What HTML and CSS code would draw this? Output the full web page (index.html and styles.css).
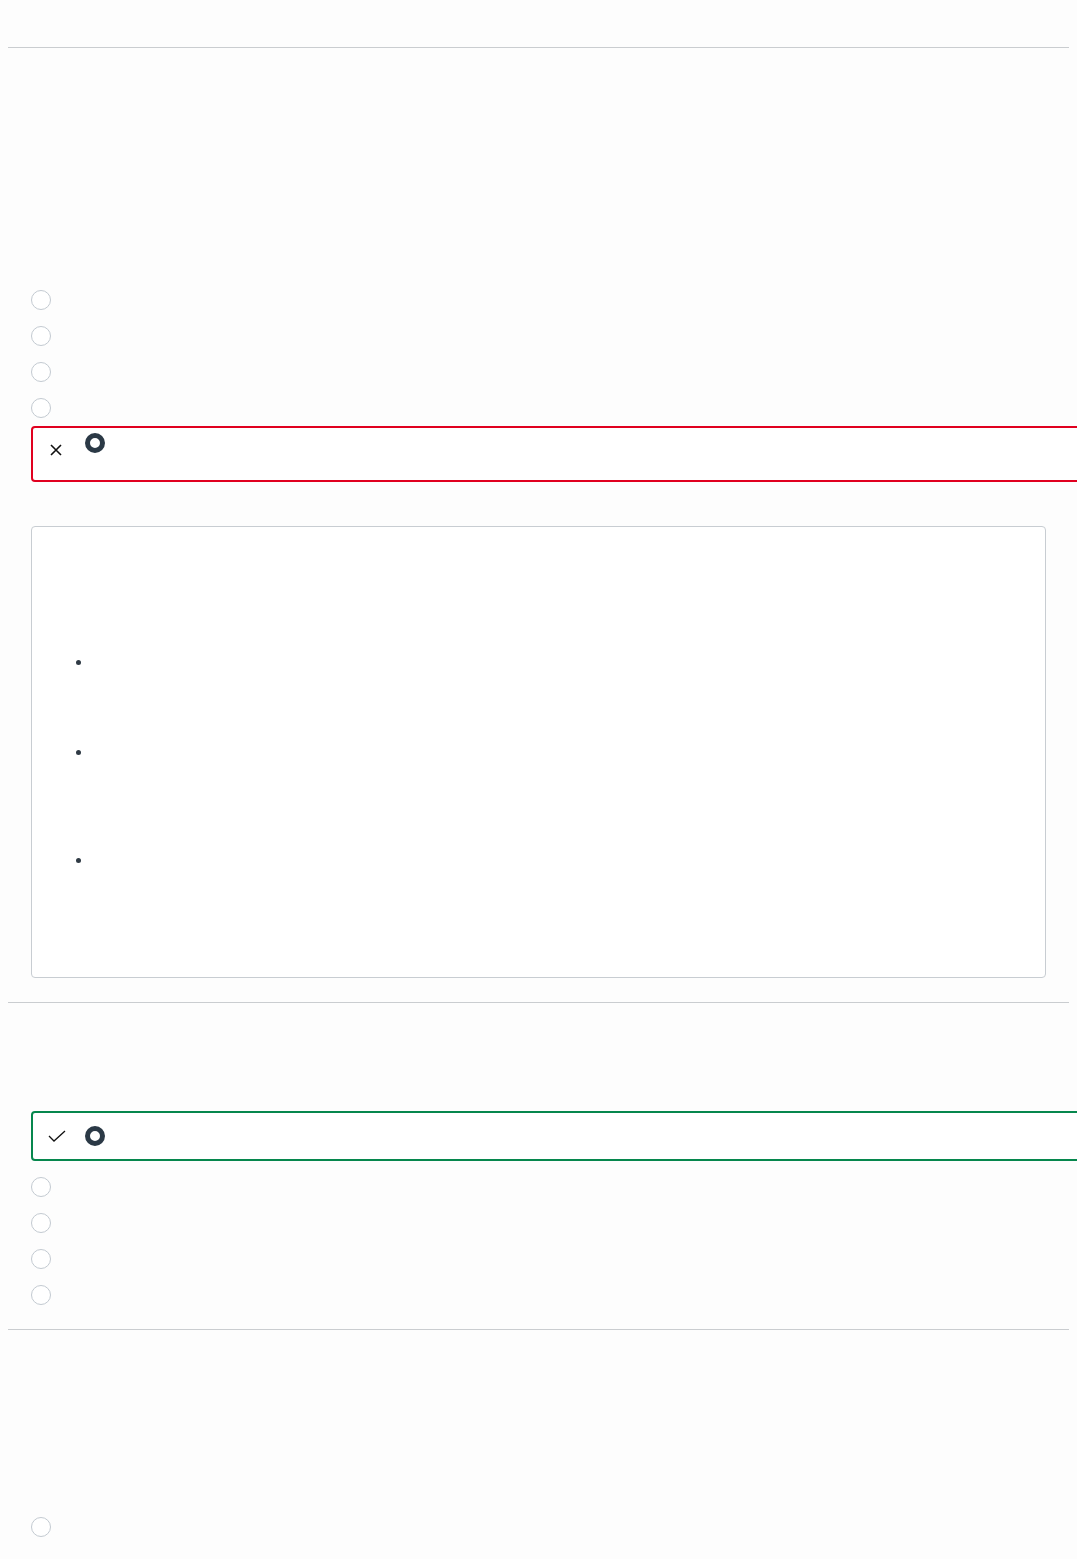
FILE: index.html
```html
<!DOCTYPE html>
<html>

<head>
	<meta charset="UTF-8">
	<title>Quiz review</title>
	<link rel="stylesheet" href="styles.css">
</head>

<body>
	<div class="page">
		<div class="rule"></div>

		<div class="question">
			<div class="stem stem-first"></div>
			<div class="option"><span class="radio"></span></div>
			<div class="option"><span class="radio"></span></div>
			<div class="option"><span class="radio"></span></div>
			<div class="option"><span class="radio"></span></div>
			<div class="answer answer-wrong">
				<svg class="mark-cross" width="12" height="12" viewBox="0 0 12 12">
					<path d="M1 1 L11 11 M11 1 L1 11" stroke="#111" stroke-width="1.6" fill="none" />
				</svg>
				<span class="radio radio-checked"></span>
			</div>

			<div class="feedback">
				<ul class="feedback-list">
					<li class="item-a"></li>
					<li class="item-b"></li>
					<li class="item-c"></li>
				</ul>
			</div>
		</div>

		<div class="rule rule-mid"></div>

		<div class="question">
			<div class="stem stem-second"></div>
			<div class="answer answer-right">
				<svg class="mark-check" width="18" height="12" viewBox="0 0 18 12">
					<path d="M1 6 L6 11 L17 1" stroke="#111" stroke-width="1.3" fill="none" />
				</svg>
				<span class="radio radio-checked"></span>
			</div>
			<div class="options-after">
				<div class="option"><span class="radio"></span></div>
				<div class="option"><span class="radio"></span></div>
				<div class="option"><span class="radio"></span></div>
				<div class="option"><span class="radio"></span></div>
			</div>
		</div>

		<div class="rule rule-last"></div>

		<div class="question">
			<div class="stem stem-third"></div>
			<div class="option"><span class="radio"></span></div>
		</div>
	</div>
</body>

</html>
```

FILE: styles.css
```css
html {
	overflow-x: hidden;
}

body {
	margin: 0;
	background: #fdfdfd;
	font-family: "Liberation Sans", Arial, sans-serif;
	color: #222;
}

.page {
	padding: 47px 8px 0;
}

.rule {
	height: 0;
	border-top: 1px solid #cacdd0;
}

.rule-mid {
	margin-top: 24px;
}

.rule-last {
	margin-top: 16px;
}

.question {
	padding-left: 23px;
}

.stem-first {
	height: 234px;
}

.stem-second {
	height: 108px;
}

.stem-third {
	height: 179px;
}

.option {
	height: 36px;
	display: flex;
	align-items: center;
}

.radio {
	display: inline-block;
	box-sizing: border-box;
	width: 20px;
	height: 20px;
	border-radius: 50%;
	border: 1px solid #c3cad1;
	background: #fff;
	flex: none;
}

.radio-checked {
	border: 5px solid #2b3946;
}

.answer {
	box-sizing: border-box;
	display: flex;
	width: calc(100% + 40px);
	border: 2px solid;
	border-radius: 4px;
	background: #fff;
}

.answer-wrong {
	height: 56px;
	border-color: #e0001f;
	align-items: flex-start;
	padding: 5px 0 0 17px;
}

.answer-wrong .mark-cross {
	margin-top: 11px;
	margin-right: 23px;
}

.answer-right {
	height: 50px;
	border-color: #06874d;
	align-items: center;
	padding-left: 15px;
}

.answer-right .mark-check {
	margin-right: 19px;
}

.feedback {
	box-sizing: border-box;
	margin-top: 44px;
	width: 1015px;
	height: 452px;
	border: 1px solid #c8cdd2;
	border-radius: 4px;
	background: #fff;
	padding: 125px 0 0 44px;
}

.feedback-list {
	margin: 0;
	padding: 0;
	list-style: none;
}

.feedback-list li {
	position: relative;
}

.feedback-list li::before {
	content: "";
	position: absolute;
	left: 0;
	top: 8px;
	width: 5px;
	height: 5px;
	border-radius: 50%;
	background: #2f3a44;
}

.item-a {
	height: 90px;
}

.item-b {
	height: 108px;
}

.item-c {
	height: 40px;
}

.options-after {
	margin-top: 8px;
}
```
